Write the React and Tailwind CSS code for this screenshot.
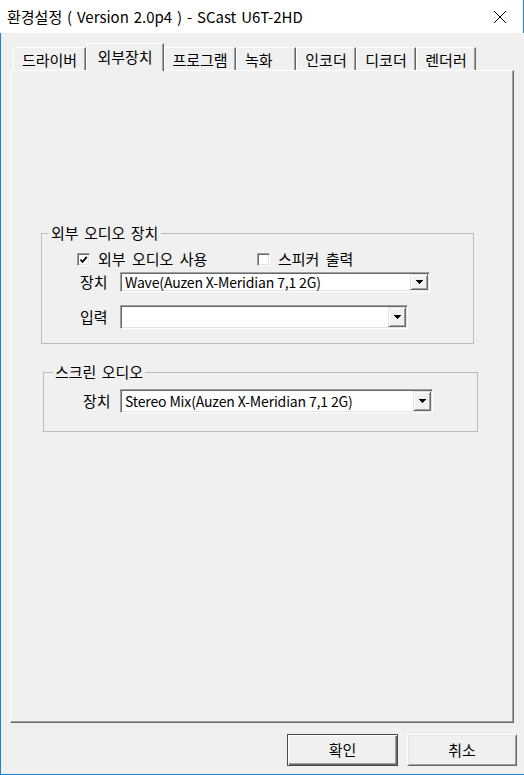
import React from "react";

const tabs = [
  { label: "드라이버", w: "w-[73px]" },
  { label: "외부장치", w: "w-[78px]", selected: true },
  { label: "프로그램", w: "w-[72px]" },
  { label: "녹화", w: "w-[60px]", left: true },
  { label: "인코더", w: "w-[60px]" },
  { label: "디코더", w: "w-[60px]" },
  { label: "렌더러", w: "w-[60px]" },
];

function Tab({ label, w, selected, left }) {
  return (
    <div
      className={`${w} flex items-center ${left ? "justify-start pl-[8px]" : "justify-center"} bg-[#f0f0f0] border-t border-l border-t-white border-l-white border-r border-r-[#696969] shadow-[inset_-1px_0_0_#a0a0a0] rounded-tl-[2px] ${
        selected ? "relative z-10 h-[28px] -mb-px pb-[2px]" : "h-[23px]"
      }`}>
      {label}
    </div>
  );
}

function DropButton() {
  return (
    <div className="w-[18px] h-full flex items-center justify-center bg-[#f0f0f0] border border-t-[#e3e3e3] border-l-[#e3e3e3] border-r-[#696969] border-b-[#696969] shadow-[inset_1px_1px_0_#fff,inset_-1px_-1px_0_#a0a0a0]">
      <svg width="7" height="4" viewBox="0 0 7 4">
        <path d="M0 0h7v1H0z M1 1h5v1H1z M2 2h3v1H2z M3 3h1v1H3z" fill="#000" />
      </svg>
    </div>
  );
}

function Combo({ w, h, text }) {
  return (
    <div
      className={`${w} ${h} flex bg-white border border-t-[#a0a0a0] border-l-[#a0a0a0] border-r-white border-b-white shadow-[inset_1px_1px_0_#696969,inset_-1px_-1px_0_#e3e3e3] p-[1px]`}>
      <div className="flex-1 min-w-0 flex items-center pl-[3px] whitespace-nowrap text-[14px] leading-[16px] tracking-[-0.15px]">
        {text}
      </div>
      <DropButton />
    </div>
  );
}

function CheckBox({ checked }) {
  return (
    <div className="w-[13px] h-[13px] bg-white border border-t-[#a0a0a0] border-l-[#a0a0a0] border-r-white border-b-white shadow-[inset_1px_1px_0_#696969,inset_-1px_-1px_0_#e3e3e3] flex items-center justify-center">
      {checked && (
        <svg width="9" height="9" viewBox="0 0 9 9">
          <path d="M1.5 4.5 L3.5 6.8 L7.8 1.8" stroke="#000" strokeWidth="1.8" fill="none" />
        </svg>
      )}
    </div>
  );
}

export default function App() {
  return (
    <div className="w-[524px] h-[775px] flex flex-col font-['Noto_Sans_CJK_KR',sans-serif] text-[15px] text-black">
      {/* 타이틀바 */}
      <div className="h-[33px] bg-white flex items-center justify-between pl-[7px] pr-[16px] border-r border-[#1883d7]">
        <span className="leading-none pb-[1px] [word-spacing:1.5px]">환경설정 ( Version 2.0p4 ) - SCast U6T-2HD</span>
        <svg width="14" height="14" viewBox="0 0 14 14">
          <path d="M1 1L13 13M13 1L1 13" stroke="#000" strokeWidth="1" />
        </svg>
      </div>

      <div className="flex-1 bg-[#f0f0f0] border-l border-b border-[#1883d7] flex flex-col">
        {/* 탭 */}
        <div className="mt-[10px] h-[27px] flex items-end pl-[12px] leading-none">
          {tabs.map((t) => (
            <Tab key={t.label} {...t} />
          ))}
        </div>

        {/* 탭 패널 */}
        <div className="ml-[9px] w-[504px] h-[653px] border border-t-white border-l-white border-r-[#696969] border-b-[#696969] shadow-[inset_-1px_-1px_0_#a0a0a0]">
          <fieldset className="ml-[30px] mt-[153px] w-[433px] border border-[#bcbcbc] pb-[14px]">
            <legend className="ml-[6px] px-[3px] leading-[18px] [word-spacing:2px]">외부 오디오 장치</legend>
            <div className="flex items-center h-[20px] mt-[7px] pl-[35px]">
              <div className="w-[180px] flex items-center gap-[8px]">
                <CheckBox checked />
                <span className="[word-spacing:3px]">외부 오디오 사용</span>
              </div>
              <div className="flex items-center gap-[8px]">
                <CheckBox />
                <span className="[word-spacing:3px]">스피커 출력</span>
              </div>
            </div>
            <div className="flex items-center h-[20px] mt-[3px] pl-[38px]">
              <span className="w-[40px]">장치</span>
              <Combo w="w-[310px]" h="h-[20px]" text="Wave(Auzen X-Meridian 7,1 2G)" />
            </div>
            <div className="flex items-center h-[24px] mt-[13px] pl-[38px]">
              <span className="w-[40px]">입력</span>
              <Combo w="w-[288px]" h="h-[24px]" text="" />
            </div>
          </fieldset>

          <fieldset className="ml-[32px] mt-[19px] w-[435px] border border-[#bcbcbc] pb-[18px]">
            <legend className="ml-[9px] px-[2px] leading-[18px] [word-spacing:2px]">스크린 오디오</legend>
            <div className="flex items-center h-[24px] mt-[8px] pl-[39px]">
              <span className="w-[37px]">장치</span>
              <Combo w="w-[313px]" h="h-[24px]" text="Stereo Mix(Auzen X-Meridian 7,1 2G)" />
            </div>
          </fieldset>
        </div>

        {/* 버튼 */}
        <div className="mt-[11px] flex justify-end gap-[9px] pr-[7px]">
          <button className="w-[111px] h-[32px] bg-[#f0f0f0] border border-[#4a4a4a] shadow-[inset_1px_1px_0_#fff,inset_-1px_-1px_0_#696969,inset_-2px_-2px_0_#a0a0a0]">
            확인
          </button>
          <button className="w-[110px] h-[32px] bg-[#f0f0f0] border border-t-white border-l-white border-r-[#696969] border-b-[#696969] shadow-[inset_1px_1px_0_#e3e3e3,inset_-1px_-1px_0_#a0a0a0]">
            취소
          </button>
        </div>
      </div>
    </div>
  );
}
